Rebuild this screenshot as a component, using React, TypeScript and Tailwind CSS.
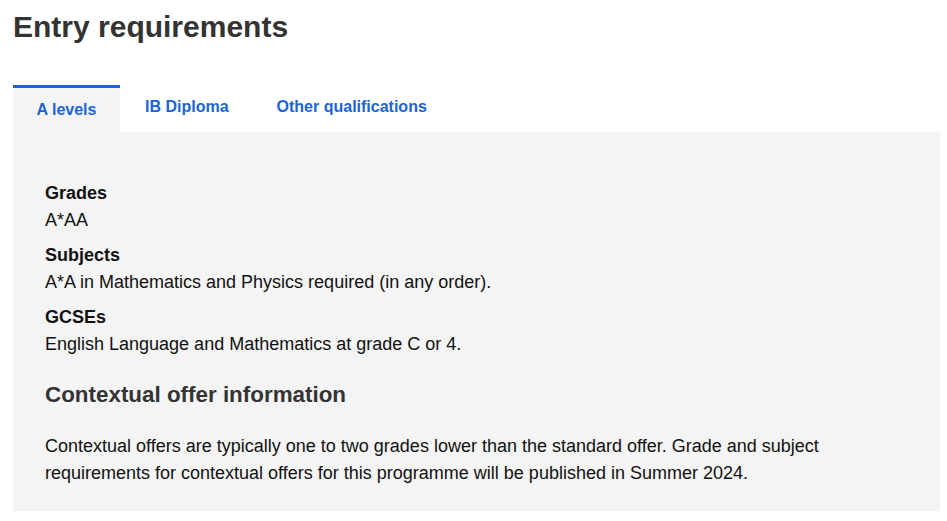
import React from "react";

export default function App() {
  return (
    <div className="min-h-[521px] bg-white pl-[13px] pr-[7px] pt-[9px]" style={{ fontFamily: '"Liberation Sans", Arial, sans-serif' }}>
      <h1 className="text-[30px] font-bold leading-[36px] text-[#333333]">Entry requirements</h1>
      <div className="mt-[40px] flex">
        <div className="flex h-[47px] w-[107px] items-center justify-center border-t-[3px] border-[#1a65d6] bg-[#f4f4f4] text-[16px] font-bold text-[#1a65d6]">
          A levels
        </div>
        <div className="flex h-[47px] items-center pb-[3px] pl-[25px] text-[16px] font-bold text-[#1a65d6]">IB Diploma</div>
        <div className="flex h-[47px] items-center pb-[3px] pl-[48px] text-[16px] font-bold text-[#1a65d6]">Other qualifications</div>
      </div>
      <div className="h-[379px] bg-[#f4f4f4] px-[32px] pt-[48px] text-[18px] leading-[27px] text-[#111111]">
        <div className="font-bold">Grades</div>
        <div>A*AA</div>
        <div className="mt-[8px] font-bold">Subjects</div>
        <div>A*A in Mathematics and Physics required (in any order).</div>
        <div className="mt-[8px] font-bold">GCSEs</div>
        <div>English Language and Mathematics at grade C or 4.</div>
        <h2 className="mt-[22px] text-[22.4px] font-bold leading-[30px] text-[#333333]">Contextual offer information</h2>
        <p className="mt-[23px]">
          Contextual offers are typically one to two grades lower than the standard offer. Grade and subject
          <br />
          requirements for contextual offers for this programme will be published in Summer 2024.
        </p>
      </div>
    </div>
  );
}
